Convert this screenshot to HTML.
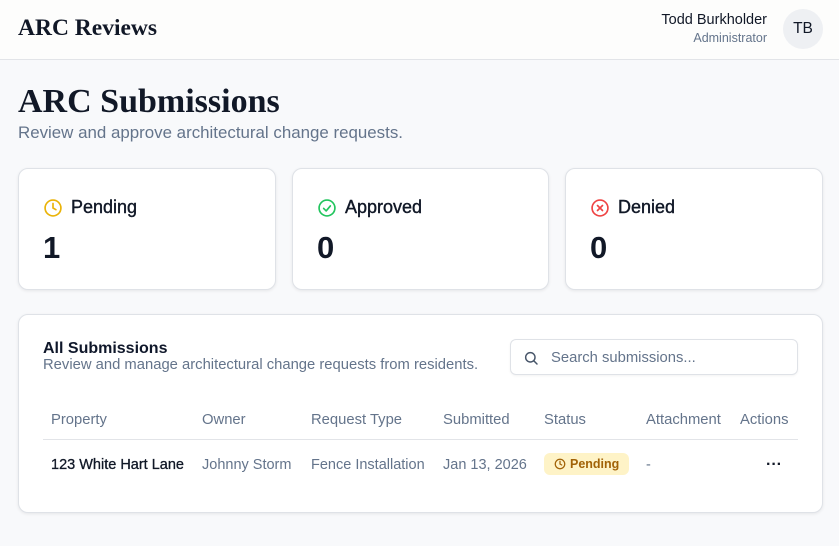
<!DOCTYPE html>
<html><head><meta charset="utf-8"><style>
*{box-sizing:border-box;margin:0;padding:0}
body{width:839px;height:546px;overflow:hidden;background:#f8f9fb;font-family:"Liberation Sans",sans-serif;color:#0f172a;position:relative}
.hdr{position:absolute;left:0;top:0;width:839px;height:60px;background:#fdfdfc;border-bottom:1px solid #e2e4e8}
.logo{position:absolute;left:18px;top:15px;font-family:"Liberation Serif",serif;font-weight:bold;font-size:23.5px;color:#111827}
.user{position:absolute;right:72px;top:12px;text-align:right}
.user .n{font-size:14.5px;color:#111827}
.user .r{font-size:12.5px;color:#64748b;margin-top:3px}
.av{position:absolute;left:783px;top:9px;width:40px;height:40px;border-radius:50%;background:#eef0f3;font-size:15.5px;color:#111827;text-align:center;line-height:40px}
h1{position:absolute;left:18px;top:83px;font-family:"Liberation Serif",serif;font-weight:bold;font-size:34px;color:#111827}
.sub{position:absolute;left:18px;top:123px;font-size:16.9px;color:#64748b}
.card{position:absolute;background:#fff;border:1px solid #dfe2e7;border-radius:10px;box-shadow:0 1px 3px rgba(0,0,0,.08)}
.st .lbl{position:absolute;left:24px;top:28px;font-size:18px;color:#111827;display:flex;align-items:center;gap:8px;-webkit-text-stroke:0.4px #111827}
.st .num{position:absolute;left:24px;top:61px;font-size:31px;font-weight:bold;color:#111827}
.t1{position:absolute;left:24px;top:25px;font-size:16px;font-weight:bold}
.t2{position:absolute;left:24px;top:42px;font-size:14.8px;color:#64748b}
.search{position:absolute;left:491px;top:24px;width:288px;height:36px;border:1px solid #dfe2e7;border-radius:6px;box-shadow:0 1px 2px rgba(0,0,0,.05)}
.search span{position:absolute;left:40px;top:10px;font-size:14.8px;color:#64748b}
.th{position:absolute;top:97px;font-size:14.8px;color:#64748b}
.td{position:absolute;top:142px;font-size:14.5px;color:#64748b}
.line{position:absolute;left:24px;top:124px;width:755px;height:1px;background:#e2e4e8}
.badge{position:absolute;left:525px;top:138px;width:85px;height:22px;background:#fef3c7;border-radius:6px;color:#a16207;font-size:12.5px;font-weight:bold;display:flex;align-items:center;gap:4px;padding-left:10px}
</style></head><body>
<div class="hdr"><div class="logo">ARC Reviews</div>
<div class="user"><div class="n">Todd Burkholder</div><div class="r">Administrator</div></div>
<div class="av">TB</div></div>
<h1>ARC Submissions</h1>
<div class="sub">Review and approve architectural change requests.</div>

<div class="card st" style="left:18px;top:168px;width:258px;height:122px"><div class="lbl"><svg width="20" height="20" viewBox="0 0 24 24" fill="none" stroke="#eab308" stroke-width="2" stroke-linecap="round"><circle cx="12" cy="12" r="9.5"/><path d="M12 6.5V12l3.5 2"/></svg>Pending</div><div class="num">1</div></div>
<div class="card st" style="left:292px;top:168px;width:257px;height:122px"><div class="lbl"><svg width="20" height="20" viewBox="0 0 24 24" fill="none" stroke="#22c55e" stroke-width="2" stroke-linecap="round" stroke-linejoin="round"><circle cx="12" cy="12" r="9.5"/><path d="M8 12.5l3 3 5-6"/></svg>Approved</div><div class="num">0</div></div>
<div class="card st" style="left:565px;top:168px;width:258px;height:122px"><div class="lbl"><svg width="20" height="20" viewBox="0 0 24 24" fill="none" stroke="#ef4444" stroke-width="2" stroke-linecap="round"><circle cx="12" cy="12" r="9.5"/><path d="M9 9l6 6M15 9l-6 6"/></svg>Denied</div><div class="num">0</div></div>

<div class="card" style="left:18px;top:314px;width:805px;height:199px">
<div class="t1">All Submissions</div>
<div class="t2">Review and manage architectural change requests from residents.</div>
<div class="search"><svg style="position:absolute;left:12px;top:10px" width="16" height="16" viewBox="0 0 24 24" fill="none" stroke="#475569" stroke-width="2.2" stroke-linecap="round"><circle cx="11" cy="11" r="7"/><path d="M16.5 16.5L21 21"/></svg><span>Search submissions...</span></div>
<div class="th" style="left:32px">Property</div>
<div class="th" style="left:183px">Owner</div>
<div class="th" style="left:292px">Request Type</div>
<div class="th" style="left:424px">Submitted</div>
<div class="th" style="left:525px">Status</div>
<div class="th" style="left:627px">Attachment</div>
<div class="th" style="left:721px">Actions</div>
<div class="line"></div>
<div class="td" style="left:32px;color:#111827;-webkit-text-stroke:0.3px #111827">123 White Hart Lane</div>
<div class="td" style="left:183px">Johnny Storm</div>
<div class="td" style="left:292px">Fence Installation</div>
<div class="td" style="left:424px">Jan 13, 2026</div>
<div class="badge"><svg width="12" height="12" viewBox="0 0 24 24" fill="none" stroke="#a16207" stroke-width="2.5" stroke-linecap="round"><circle cx="12" cy="12" r="9.5"/><path d="M12 6.5V12l3.5 2"/></svg>Pending</div>
<div class="td" style="left:627px">-</div>
<div class="td" style="left:747px;color:#111827;font-weight:bold;top:141px;font-size:16px">···</div>
</div>
</body></html>
